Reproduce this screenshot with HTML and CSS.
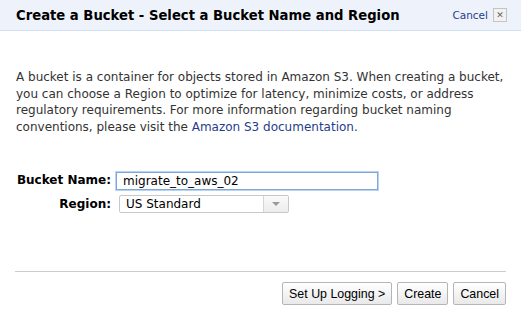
FILE: index.html
```
<!DOCTYPE html>
<html lang="en">
<head>
    <meta charset="UTF-8">
    <title>Create a Bucket</title>
    <link rel="stylesheet" href="styles.css">
</head>
<body>
    <div class="dialog">
        <div class="header">
            <h2>Create a Bucket - Select a Bucket Name and Region</h2>
            <a href="#" class="cancel-link">Cancel</a>
            <span class="close-box">&#x2715;</span>
        </div>

        <div class="content">
            <p class="intro">A bucket is a container for objects stored in Amazon S3. When creating a bucket, you can choose a Region to optimize for latency, minimize costs, or address regulatory requirements. For more information regarding bucket naming conventions, please visit the <a href="#">Amazon S3 documentation</a>.</p>

            <div class="form">
                <label class="row-label">Bucket Name:</label>
                <div><input type="text" class="name-input" value="migrate_to_aws_02"></div>
                <label class="row-label">Region:</label>
                <div class="select">
                    <span class="select-value">US Standard</span>
                    <span class="select-arrow"></span>
                </div>
            </div>
        </div>

        <div class="footer">
            <button>Set Up Logging &gt;</button>
            <button>Create</button>
            <button>Cancel</button>
        </div>
    </div>
</body>
</html>
```

FILE: styles.css
```
body {
    margin: 0;
    background: #fff;
    font-family: "DejaVu Sans", Verdana, sans-serif;
}
.dialog {
    width: 521px;
    height: 315px;
    display: flex;
    flex-direction: column;
}
.header {
    height: 30px;
    background: #eef3fb;
    border-bottom: 1px solid #cfe0f3;
    display: flex;
    align-items: center;
    padding: 0 14px 0 16px;
}
.header h2 {
    flex-grow: 1;
    margin: 0;
    font-size: 13.2px;
    font-weight: bold;
    color: #000;
}
.cancel-link {
    font-size: 10.5px;
    color: #1f3d8c;
    text-decoration: none;
    margin-right: 5px;
}
.close-box {
    width: 12px;
    height: 12px;
    border: 1px solid #c4c4c4;
    background: #f2f2f2;
    color: #666;
    font-size: 9px;
    line-height: 12px;
    text-align: center;
}
.content {
    padding: 0 16px;
    flex-grow: 1;
}
.intro {
    margin: 38px 0 0;
    font-size: 12px;
    line-height: 16.5px;
    color: #333;
}
.intro a {
    color: #1f3d8c;
    text-decoration: none;
}
.form {
    margin-top: 35px;
    display: grid;
    grid-template-columns: 95px auto;
    column-gap: 5px;
    row-gap: 5px;
    align-items: center;
}
.row-label {
    text-align: right;
    font-weight: bold;
    font-size: 12px;
    color: #000;
}
.name-input {
    box-sizing: border-box;
    width: 262px;
    height: 18px;
    margin: 0;
    padding: 0 6px;
    border: 1px solid #7ba7d9;
    box-shadow: 0 0 0 1px #b9d3f0;
    font-family: "DejaVu Sans", Verdana, sans-serif;
    font-size: 12px;
    color: #000;
    outline: none;
}
.select {
    box-sizing: border-box;
    width: 170px;
    height: 18px;
    margin-left: 3px;
    border: 1px solid #c8c8c8;
    border-radius: 2px;
    display: flex;
    align-items: center;
    font-size: 12px;
    color: #000;
}
.select-value {
    flex-grow: 1;
    padding-left: 6px;
}
.select-arrow {
    width: 24px;
    height: 100%;
    border-left: 1px solid #d4d4d4;
    background: linear-gradient(#fafafa, #ececec);
    position: relative;
}
.select-arrow::after {
    content: "";
    position: absolute;
    left: 8px;
    top: 6px;
    border-left: 4px solid transparent;
    border-right: 4px solid transparent;
    border-top: 4px solid #999;
}
.footer {
    margin: 0 15px;
    border-top: 1px solid #ccc;
    padding: 10px 0 10px;
    display: flex;
    justify-content: flex-end;
    gap: 5px;
}
.footer button {
    height: 23px;
    padding: 0 6px;
    border: 1px solid #b5b5b5;
    border-radius: 2px;
    background: linear-gradient(#ffffff, #e9e9e9);
    font-family: "Liberation Sans", Arial, sans-serif;
    font-size: 12.4px;
    color: #000;
}
```
